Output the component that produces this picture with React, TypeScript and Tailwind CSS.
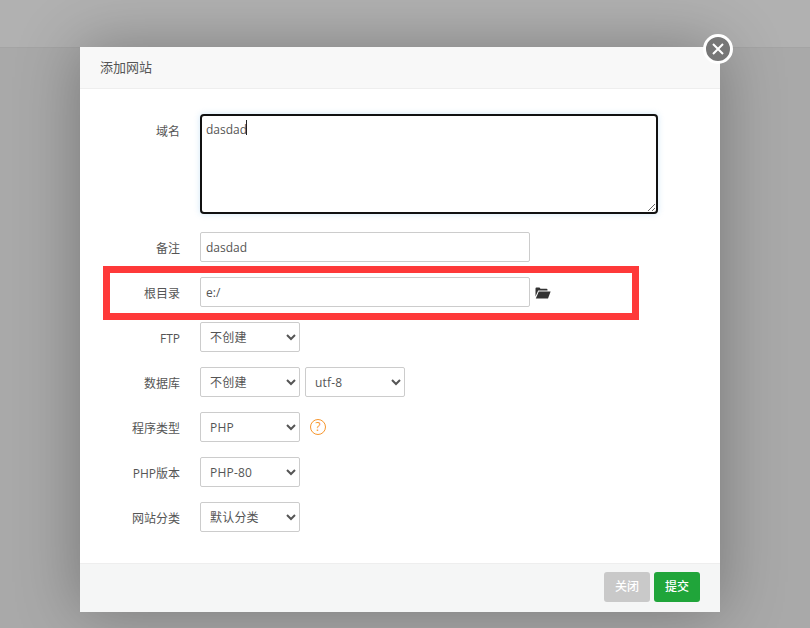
import React from "react";

const font = { fontFamily: '"Open Sans","Noto Sans CJK SC",sans-serif' };

function Row({ label, children }: { label: string; children: React.ReactNode }) {
  return (
    <div className="flex items-center h-[30px] mb-[15px]">
      <label className="w-[120px] pr-5 pt-[4px] text-right text-xs text-[#555] leading-[26px] shrink-0">{label}</label>
      {children}
    </div>
  );
}

const inputCls =
  "h-[30px] w-[330px] border border-[#ccc] rounded-[2px] px-[5px] text-xs text-[#555] bg-white outline-none";

function Sel({ value, w = "w-[100px]" }: { value: string; w?: string }) {
  return (
    <select
      defaultValue={value}
      className={`h-[30px] ${w} border border-[#ccc] rounded-[2px] pl-[5px] text-xs tracking-[0.2px] text-[#555] bg-white outline-none`}
      style={{ appearance: "auto" }}
    >
      <option>{value}</option>
    </select>
  );
}

export default function App() {
  return (
    <div className="relative w-[810px] h-[628px] overflow-hidden bg-[#a9a9a9] text-[#555]" style={font}>
      <div className="h-[48px] bg-[#b1b1b1] border-b border-[#a4a4a4]" />
      <div className="absolute left-[80px] top-[47px] w-[640px] h-[565px] bg-white flex flex-col shadow-[0_0_60px_rgba(0,0,0,0.3)]">
        <div className="h-[42px] shrink-0 bg-[#f8f8f8] border-b border-[#eee] pl-5 text-[13px] leading-[41px] text-[#555]">
          添加网站
        </div>
        <div className="flex-1 pt-[25px]">
          <div className="flex items-start mb-[18px]">
            <label className="w-[120px] pr-5 pt-[3px] text-right text-xs text-[#555] leading-[30px] shrink-0">域名</label>
            <div className="relative">
              <textarea
                readOnly
                defaultValue="dasdad"
                className="block w-[458px] h-[100px] border-2 border-[#111] rounded-[4px] px-[4px] pt-[4px] text-xs leading-[20px] text-[#555] bg-white outline-none shadow-[0_0_6px_rgba(102,175,233,0.3)]"
              />
              <span className="absolute left-[46px] top-[6px] w-px h-[15px] bg-[#222]" />
            </div>
          </div>
          <Row label="备注">
            <input readOnly defaultValue="dasdad" className={inputCls} />
          </Row>
          <Row label="根目录">
            <input readOnly defaultValue="e:/" className={inputCls} />
            <svg className="ml-[5px] mt-[1px]" width="16" height="12" viewBox="0 0 16 12">
              <path d="M0.5 1.5Q0.5 0.5 1.5 0.5H4.5L5.5 1.7H11.5Q12.5 1.7 12.5 2.7V3.6H3.2L0.5 9.5Z" fill="#333" />
              <path d="M3.8 4.6H15.6L13 11.5H0.8Z" fill="#333" />
            </svg>
          </Row>
          <Row label="FTP">
            <Sel value="不创建" />
          </Row>
          <Row label="数据库">
            <Sel value="不创建" />
            <span className="w-[5px]" />
            <Sel value="utf-8" />
          </Row>
          <Row label="程序类型">
            <Sel value="PHP" />
            <span className="ml-[10px] w-4 h-4 rounded-full border-[1.5px] border-[#f7962d] text-[#f7962d] text-xs leading-[13px] text-center">?</span>
          </Row>
          <Row label="PHP版本">
            <Sel value="PHP-80" />
          </Row>
          <Row label="网站分类">
            <Sel value="默认分类" />
          </Row>
        </div>
        <div className="h-[49px] shrink-0 bg-[#f5f6f6] border-t border-[#eee] flex items-start justify-end gap-1 pt-2 pr-5">
          <button className="w-[46px] h-[30px] rounded-[3px] bg-[#c9c9c9] text-white text-xs font-medium">关闭</button>
          <button className="w-[46px] h-[30px] rounded-[3px] bg-[#20a53a] text-white text-xs font-medium">提交</button>
        </div>
      </div>
      <div className="absolute left-[103px] top-[266px] w-[536px] h-[54px] border-[7px] border-[#fe3939]" />
      <div className="absolute left-[703px] top-[34px] w-[30px] h-[30px] rounded-full bg-[#777] border-[3px] border-white flex items-center justify-center">
        <svg width="12" height="12" viewBox="0 0 12 12">
          <path d="M1 1L11 11M11 1L1 11" stroke="#fff" strokeWidth="2" />
        </svg>
      </div>
    </div>
  );
}
